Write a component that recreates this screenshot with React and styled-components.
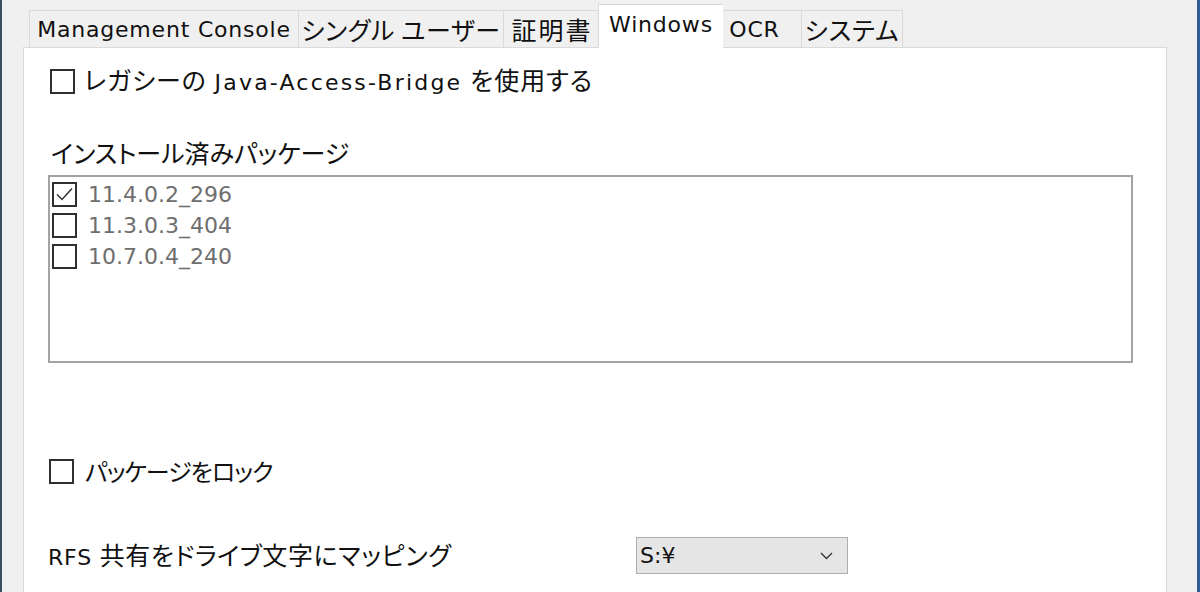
import React from "react";
import styled, { createGlobalStyle } from "styled-components";

const Global = createGlobalStyle`
  html, body { margin: 0; padding: 0; background: #f0f0f0; }
  body {
    font-family: "DejaVu Sans", "Noto Sans CJK JP", sans-serif;
    color: #111;
  }
`;

const Window = styled.div`
  width: 1200px;
  height: 592px;
  box-sizing: border-box;
  border-left: 2px solid #3b4d63;
  border-right: 3px solid #2f5d98;
  background: #f0f0f0;
  overflow: hidden;
  display: flex;
  flex-direction: column;
  font-size: 22px;
  letter-spacing: 0.8px;
`;

const Ja = styled.span`
  font-family: "Noto Sans CJK JP", sans-serif;
  font-size: ${(p) => p.$size || 25}px;
  font-feature-settings: "palt";
  letter-spacing: ${(p) => (p.$ls != null ? p.$ls : 1)}px;
  line-height: 1;
`;

const Wide = styled.span`
  letter-spacing: ${(p) => p.$ls}px;
`;

const TabStrip = styled.div`
  display: flex;
  align-items: flex-end;
  padding: 4px 0 0 27px;
  height: 44px;
`;

const Tab = styled.div`
  box-sizing: border-box;
  width: ${(p) => p.$w}px;
  height: ${(p) => (p.$active ? 44 : 38)}px;
  margin: 0 ${(p) => (p.$active ? -2 : 0)}px;
  padding-bottom: ${(p) => (p.$active ? 4 : 0)}px;
  padding-right: ${(p) => p.$pr || 0}px;
  border: 1px solid #d9d9d9;
  border-bottom: none;
  border-right: ${(p) => (p.$last ? "1px solid #d9d9d9" : "none")};
  background: ${(p) => (p.$active ? "#ffffff" : "#f0f0f0")};
  position: ${(p) => (p.$active ? "relative" : "static")};
  z-index: ${(p) => (p.$active ? 2 : "auto")};
  display: flex;
  align-items: center;
  justify-content: center;
  white-space: nowrap;
  color: #111;
`;

const Panel = styled.div`
  position: relative;
  z-index: 1;
  margin: -1px 0 0 21px;
  width: 1144px;
  flex: 1;
  box-sizing: border-box;
  background: #ffffff;
  border: 1px solid #dadada;
  border-bottom: none;
  padding: 20px 0 0 24px;
  display: flex;
  flex-direction: column;
  align-items: flex-start;
`;

const CheckRow = styled.label`
  display: flex;
  align-items: center;
  gap: ${(p) => p.$gap || 10}px;
  height: 26px;
  margin-top: ${(p) => p.$mt || 0}px;
  margin-left: ${(p) => p.$ml || 0}px;
  line-height: 26px;
  white-space: nowrap;
`;

const Box = styled.span`
  box-sizing: border-box;
  width: 25px;
  height: 25px;
  border: 2px solid #303030;
  background: #fff;
  display: flex;
  align-items: center;
  justify-content: center;
  flex: none;
`;

const SectionLabel = styled.div`
  margin: 46px 0 0 3px;
  line-height: 28px;
  height: 28px;
`;

const ListBox = styled.div`
  margin-top: 7px;
  width: 1085px;
  height: 188px;
  box-sizing: border-box;
  border: 2px solid #a3a3a3;
  padding: 2px 0 0 2px;
  display: flex;
  flex-direction: column;
`;

const ListItem = styled.div`
  display: flex;
  align-items: center;
  gap: 11px;
  height: 31px;
  color: #6e6e6e;
  line-height: 31px;
  letter-spacing: 0;
`;

const MapRow = styled.div`
  margin-top: 53px;
  display: grid;
  grid-template-columns: 588px 212px;
  align-items: center;
  height: 37px;
  white-space: nowrap;
`;

const Select = styled.div`
  box-sizing: border-box;
  height: 37px;
  background: #e5e5e5;
  border: 1px solid #adadad;
  display: flex;
  align-items: center;
  justify-content: space-between;
  padding: 0 14px 0 3px;
  letter-spacing: 0;
  color: #111;
`;

const Check = ({ checked }) => (
  <Box>
    {checked && (
      <svg width="19" height="17" viewBox="0 0 19 17">
        <polyline points="2,8.5 7,13.5 17,2.5" fill="none" stroke="#333" strokeWidth="1.5" />
      </svg>
    )}
  </Box>
);

const Chevron = () => (
  <svg width="13" height="8" viewBox="0 0 13 8">
    <polyline points="1,1 6.5,6.5 12,1" fill="none" stroke="#333" strokeWidth="1.3" />
  </svg>
);

const tabs = [
  { key: "mc", label: "Management Console", w: 269 },
  { key: "su", label: <Ja $ls={0.6}>シングル ユーザー</Ja>, w: 205 },
  { key: "cert", label: <Ja $ls={2}>証明書</Ja>, w: 97 },
  { key: "win", label: "Windows", w: 125, active: true },
  { key: "ocr", label: "OCR", w: 80, pr: 14 },
  { key: "sys", label: <Ja $ls={1}>システム</Ja>, w: 102, last: true },
];

const packages = [
  { v: "11.4.0.2_296", checked: true },
  { v: "11.3.0.3_404", checked: false },
  { v: "10.7.0.4_240", checked: false },
];

export default function App() {
  return (
    <>
      <Global />
      <Window>
        <TabStrip>
          {tabs.map((t) => (
            <Tab key={t.key} $w={t.w} $active={t.active} $last={t.last} $pr={t.pr}>
              {t.label}
            </Tab>
          ))}
        </TabStrip>
        <Panel>
          <CheckRow $ml={2} $gap={9}>
            <Check />
            <span>
              <Ja>レガシーの</Ja> <Wide $ls={2.2}>Java-Access-Bridge</Wide> <Ja>を使用する</Ja>
            </span>
          </CheckRow>
          <SectionLabel>
            <Ja $ls={0}>インストール済みパッケージ</Ja>
          </SectionLabel>
          <ListBox>
            {packages.map((p) => (
              <ListItem key={p.v}>
                <Check checked={p.checked} />
                <span>{p.v}</span>
              </ListItem>
            ))}
          </ListBox>
          <CheckRow $mt={95} $ml={1} $gap={11}>
            <Check />
            <Ja $size={24} $ls={-1}>パッケージをロック</Ja>
          </CheckRow>
          <MapRow>
            <span>
              RFS <Ja $ls={0.6}>共有をドライブ文字にマッピング</Ja>
            </span>
            <Select>
              <span>S:¥</span>
              <Chevron />
            </Select>
          </MapRow>
        </Panel>
      </Window>
    </>
  );
}
